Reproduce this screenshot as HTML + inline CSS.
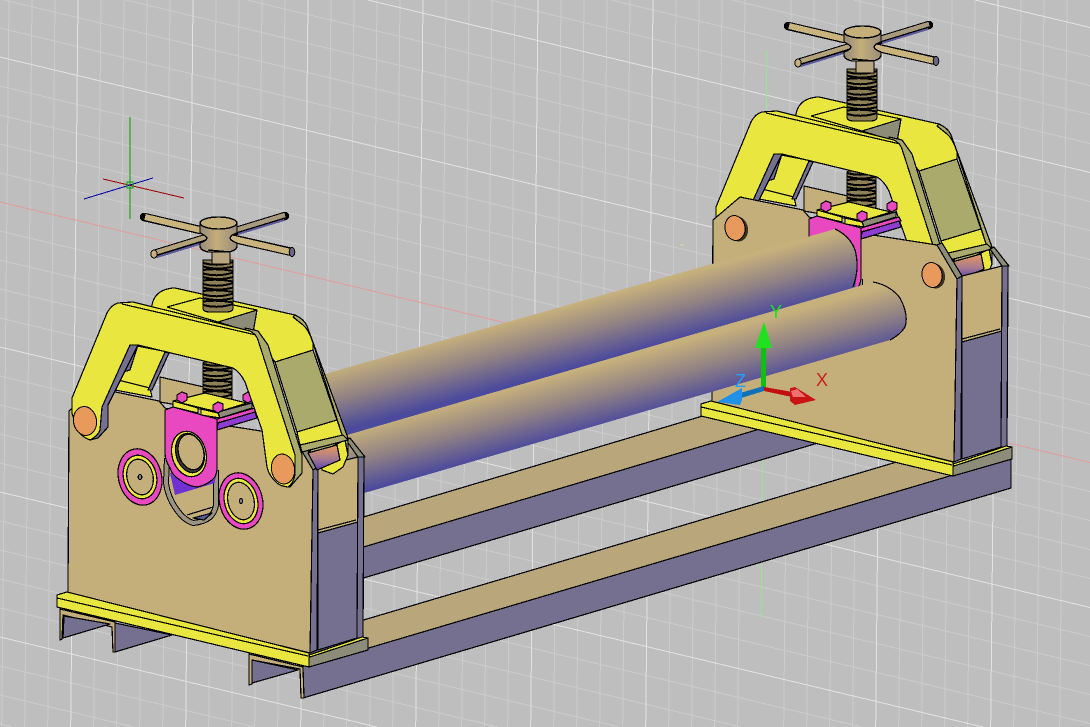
<!DOCTYPE html>
<html>
<head>
<meta charset="utf-8">
<title>CAD model</title>
<style>
html,body{margin:0;padding:0;background:#bebebe;width:1090px;height:727px;overflow:hidden}
svg{display:block}
.k{stroke:#000;stroke-width:1.2;stroke-linejoin:round}
.t{fill:#c4ae7a}.y{fill:#e9e640}.o{fill:#aaaa6c}.g{fill:#8c8c78}.s{fill:#75708f}.m{fill:#e848c0}.p{fill:#8f3cd0}
</style>
</head>
<body>
<svg width="1090" height="727" viewBox="0 0 1090 727" xmlns="http://www.w3.org/2000/svg" shape-rendering="crispEdges">
<defs>
<linearGradient id="r1" gradientUnits="userSpaceOnUse" x1="600" y1="297" x2="616" y2="356"><stop offset="0" stop-color="#c6b07c"/><stop offset=".5" stop-color="#8f8184"/><stop offset="1" stop-color="#4c4a9c"/></linearGradient>
<linearGradient id="r2" gradientUnits="userSpaceOnUse" x1="600" y1="364" x2="616" y2="423"><stop offset="0" stop-color="#c6b07c"/><stop offset=".5" stop-color="#8f8184"/><stop offset="1" stop-color="#4c4a9c"/></linearGradient>
<linearGradient id="cap" x1="0" x2="1" y1="0" y2="0"><stop offset="0" stop-color="#968a78"/><stop offset=".45" stop-color="#c4ae7a"/><stop offset="1" stop-color="#9a8c7c"/></linearGradient>
<linearGradient id="stub" x1="0" x2="0" y1="0" y2="1"><stop offset="0" stop-color="#e89a5c"/><stop offset=".55" stop-color="#a87a90"/><stop offset="1" stop-color="#5a40b0"/></linearGradient>

<g id="back">
  <polygon class="t k" points="160,377 217,390 217,412 160,402"/>
  <rect x="203" y="362" width="29" height="44" rx="2" fill="#8f7f56" stroke="#000" stroke-width="1.2"/>
  <path fill="none" stroke="#000" stroke-width="2" d="M203 364q15 4 29 -1m-29 4.5q15 4 29 0m-29 3.5q15 -2 29 1m-29 2.5q15 4 29 -1m-29 4.5q15 4 29 0m-29 3.5q15 -2 29 1m-29 2.5q15 4 29 -1m-29 4.5q15 4 29 0m-29 3.5q15 -2 29 1m-29 2.5q15 4 29 -1m-29 4.5q15 4 29 0m-29 3.5q15 -2 29 1"/>
</g>

<g id="yoke">
  <polygon class="o k" points="308,453 320,452 322,470 333,474 343,467 348,455 348,440 320,440"/>
  <polygon class="y k" points="321,452 345,440 348,455 343,467 333,474 322,470"/>
  <polygon fill="url(#stub)" class="k" points="308,453 337,445 340,460 317,470"/>
  <polygon class="y k" points="132,345 168,352 150,388 118,380"/>
  <polygon class="y k" points="118,380 150,388 152,397 115,390"/>
  <polygon class="s k" points="165,352 169,353 152,390 148,390"/>
  <polygon class="s k" points="130,347 138,345 130,370 123,372"/>
  <path class="y k" d="M150,311L152,305Q154,295 162,291Q168,288 175,288L295,315Q304,319 307,326L313,343V350L275,362L262,345L250,332Z"/>
  <polyline fill="none" class="k" points="167,307 200,298 257,310"/>
  <line class="k" x1="167" y1="307" x2="218" y2="322"/>
  <polygon class="g k" points="218,322 257,310 253,333 247,331"/>
  <path class="o k" d="M295,315Q304,319 307,326L348,438H343L313,343Q309,330 303,325L293,317Z"/>
  <polygon class="o k" points="275,362 313,350 337,420 297,432"/>
  <polygon class="y k" points="297,432 337,420 343,438 300,445"/>
  <polygon class="o k" points="300,445 343,435 348,440 302,452"/>
  <path d="M203,260H233V308Q233,312 226,312H210Q203,312 203,308Z" fill="#8f7f56" stroke="#000" stroke-width="1.2"/>
  <path fill="none" stroke="#000" stroke-width="2" d="M203 263q15 4 30 -1m-30 4.5q15 4 30 0m-30 3.5q15 -2 30 1m-30 2.5q15 4 30 -1m-30 4.5q15 4 30 0m-30 3.5q15 -2 30 1m-30 2.5q15 4 30 -1m-30 4.5q15 4 30 0m-30 3.5q15 -2 30 1m-30 2.5q15 4 30 -1m-30 4.5q15 4 30 0m-30 3.5q15 -2 30 1m-30 2.5q15 4 30 -1"/>
  <polygon class="o k" points="245,328 258,331 268,345 302,455 302,473 290,487 280,484"/>
  <polygon class="s k" points="130,345 138,345 108,405 108,427 98,438 90,440 100,430 102,407"/>
  <path class="y k" d="M72,398L107,313Q111,305 118,303L133,302L250,331Q256,334 258,340L295,455V475Q293,484 288,487Q280,486 277,483Q269,476 267,467L262,430L245,382Q240,372 233,368L138,345H130L102,407L100,430Q98,436 90,440Q82,437 77,430L72,413Z"/>
  <line class="k" x1="122" y1="304" x2="256" y2="335"/>
  <g>
    <line x1="144" y1="217" x2="200" y2="230" stroke="#000" stroke-width="8.5" stroke-linecap="round"/>
    <line x1="230" y1="238" x2="292" y2="252" stroke="#000" stroke-width="8.5"/>
    <line x1="154" y1="254" x2="206" y2="238" stroke="#000" stroke-width="8.5"/>
    <line x1="236" y1="231" x2="285" y2="216" stroke="#000" stroke-width="8.5" stroke-linecap="round"/>
    <line x1="145" y1="217" x2="200" y2="230" stroke="#c8b47c" stroke-width="6"/>
    <line x1="230" y1="238" x2="291" y2="252" stroke="#c8b47c" stroke-width="6"/>
    <line x1="154" y1="253" x2="206" y2="237" stroke="#b3a27a" stroke-width="4.5"/>
    <line x1="236" y1="230" x2="285" y2="215" stroke="#a89a7e" stroke-width="4.5"/>
    <line x1="157" y1="257" x2="206" y2="242" stroke="#5c5a9c" stroke-width="2"/>
    <line x1="238" y1="234" x2="284" y2="220" stroke="#5c5a9c" stroke-width="2"/>
    <ellipse cx="292" cy="252" rx="2.8" ry="4.5" fill="#6a6686" stroke="#000"/>
    <ellipse cx="154" cy="254" rx="3.2" ry="4" fill="#c8b47c" stroke="#000"/>
    <polygon points="212,249 230,250 230,264 212,264" fill="#b8a680" stroke="#000"/>
    <path d="M200,223V233Q206,236 207,238Q206,241 200,243V246Q200,250 208,252H229Q237,250 237,246V243Q231,241 230,238Q231,235 237,233V223Z" fill="url(#cap)" stroke="#000" stroke-width="1.4"/>
    <ellipse cx="218.500" cy="223" rx="18.500" ry="6" fill="#c4ae7a" stroke="#000" stroke-width="1.4"/>
    <line x1="208" y1="250" x2="230" y2="252" stroke="#000" stroke-width="1.4"/>
  </g>
</g>

<g id="frame">
  <polygon class="s k" points="312,470 318,467 317,650 310,653"/>
  <polygon class="t k" points="318,467 358,457 358,522 318,533"/>
  <line class="k" x1="318" y1="530" x2="356" y2="520"/>
  <polygon class="s k" points="318,533 358,522 357,638 318,650"/>
  <polygon class="s k" points="358,457 364,457 363,638 357,638"/>
  <polygon class="g k" points="346,440 350,438 365,457 358,457"/>
  <polygon class="g k" points="293,436 298,434 318,467 313,470"/>
  <polygon class="t k" points="69,411 96,388 159,401 165,408 216,424 293,436 313,470 310,653 68,593"/>
  <path d="M167,458L166,483Q168,498 177,510Q184,520 193,523Q204,522 210,517Q215,512 216,505L216,470" fill="none" stroke="#000" stroke-width="6"/>
  <path d="M167,458L166,483Q168,498 177,510Q184,520 193,523Q204,522 210,517Q215,512 216,505L216,470" fill="none" stroke="#9a9480" stroke-width="4"/>
  <line class="k" x1="187" y1="515" x2="213" y2="507"/>
  <polygon fill="#5c5a98" class="k" points="193,518 212,513 204,520"/>
  <polygon fill="#7030d4" points="170,473 216,470 215,483 175,495"/>
  <path class="m k" d="M165,410L173,407L217,419L217,470Q216,475 215,477Q208,485 197,487Q188,486 180,480Q172,475 170,468Q165,460 165,453Z"/>
  <polygon class="m k" points="217,419 255,408 257,412 217,423"/>
  <polygon class="p k" points="218,423 255,412 257,418 217,430"/>
  <ellipse cx="189" cy="454" rx="17" ry="23" transform="rotate(-15 189 454)" class="y k"/>
  <ellipse cx="190" cy="453" rx="14" ry="20" transform="rotate(-15 190 453)" fill="#3c3830" class="k"/>
  <ellipse cx="191" cy="452" rx="12.500" ry="18" transform="rotate(-15 191 452)" class="t k"/>
  <polygon class="y k" points="173,401 205,393 247,403 218,412"/>
  <polygon class="y k" points="173,401 198,408 198,413 173,407"/>
  <polygon class="y k" points="201,409 218,413 220,418 201,415"/>
  <polygon class="g k" points="218,412 252,403 252,408 220,418"/>
  <polygon class="m k" points="177,395 182,392 187,394 187,400 182,403 177,400"/>
  <polygon class="m k" points="213,405 218,402 223,404 223,410 218,413 213,410"/>
  <polygon class="m k" points="243,395 248,392 253,394 253,400 248,403 243,400"/>
  <polygon class="y k" points="57,595 67,592 309,653 309,667 57,607"/>
  <line class="k" x1="57" y1="598" x2="308" y2="656"/>
  <polygon class="g k" points="309,655 368,638 368,650 309,667"/>
  <polygon class="y k" points="309,655 362,637 368,638 310,657"/>
</g>
</defs>

<rect width="1090" height="727" fill="#bebebe"/>
<path stroke="#cccccc" stroke-width="1" fill="none" d="M9 0l-7.3 727M32 0l-7.3 727M55 0l-7.3 727M101 0l-7.3 727M124 0l-7.3 727M147 0l-7.3 727M170 0l-7.3 727M216 0l-7.3 727M239 0l-7.3 727M262 0l-7.3 727M285 0l-7.3 727M331 0l-7.3 727M354 0l-7.3 727M377 0l-7.3 727M400 0l-7.3 727M446 0l-7.3 727M469 0l-7.3 727M492 0l-7.3 727M515 0l-7.3 727M561 0l-7.3 727M584 0l-7.3 727M607 0l-7.3 727M630 0l-7.3 727M676 0l-7.3 727M699 0l-7.3 727M722 0l-7.3 727M745 0l-7.3 727M791 0l-7.3 727M814 0l-7.3 727M837 0l-7.3 727M860 0l-7.3 727M906 0l-7.3 727M929 0l-7.3 727M952 0l-7.3 727M975 0l-7.3 727M1021 0l-7.3 727M1044 0l-7.3 727M1067 0l-7.3 727
M854 0L1090 56.5M732 0L1090 85.5M611 0L1090 114.5M490 0L1090 143.5M247 0L1090 201.5M126 0L1090 230.5M4 0L1090 259.5M0 28L1090 288.5M0 86L1090 346.5M0 115L1090 375.5M0 144L1090 404.5M0 173L1090 433.5M0 231L1090 491.5M0 260L1090 520.5M0 289L1090 549.500M0 318L1090 578.5M0 376L1090 636.5M0 405L1090 665.5M0 434L1090 694.5M0 463L1090 723.5M862 727L0 521M741 727L0 550M619 727L0 579M498 727L0 608M255 727L0 666M134 727L0 695M13 727L0 724"/>
<path stroke="#e2e2e2" stroke-width="1" fill="none" d="M78 0l-7.3 727M193 0l-7.3 727M308 0l-7.3 727M423 0l-7.3 727M538 0l-7.3 727M653 0l-7.3 727M883 0l-7.3 727M998 0l-7.3 727M975 0L1090 27.5M368 0L1090 172.5M0 57L1090 317.5M0 347L1090 607.5M983 727L0 492M377 727L0 637"/>
<line x1="0" y1="202" x2="1090" y2="462.500" stroke="#e29a9a"/>
<line x1="767" y1="50" x2="761" y2="618" stroke="#96e696"/>
<line x1="680" y1="245" x2="684" y2="245" stroke="#d8e690"/>

<line x1="130" y1="117" x2="130" y2="219" stroke="#00a000"/>
<line x1="103" y1="179" x2="184" y2="198" stroke="#a00000"/>
<line x1="84" y1="199" x2="153" y2="178" stroke="#0000a8"/>
<rect x="127" y="182" width="6" height="6" fill="none" stroke="#00a000"/>

<!-- rails -->
<polygon class="s k" points="303,650 1011,450 1011,488 303,698"/>
<polygon fill="#b9a77b" class="k" points="340,627 900,461 953,475 345,655"/>
<polygon class="s k" points="340,554 800,417 818,443 340,585"/>
<polygon fill="#b9a77b" class="k" points="340,524 800,387 800,417 340,554"/>

<!-- right frame -->
<g transform="translate(644,-191)">
  <use href="#back"/>
  <use href="#yoke"/>
  <use href="#frame"/>
</g>
<ellipse cx="738" cy="229" rx="10" ry="12.500" fill="#3a3320" transform="rotate(-10 738 229)"/>
<ellipse cx="735" cy="228" rx="10" ry="12.500" fill="#e89a5c" stroke="#000" transform="rotate(-10 735 228)"/>
<ellipse cx="935" cy="276" rx="10" ry="12.500" fill="#3a3320" transform="rotate(-10 935 276)"/>
<ellipse cx="932" cy="275" rx="10" ry="12.500" fill="#e89a5c" stroke="#000" transform="rotate(-10 932 275)"/>

<!-- rollers -->
<path fill="url(#r1)" stroke="none" d="M300,381L835,229Q850,236 855,250Q860,268 853,300L300,460Z"/>
<path fill="none" stroke="#000" stroke-width="1.2" d="M835,229Q850,236 855,250Q860,268 853,287"/>
<path fill="url(#r2)" stroke="none" d="M330,440L873,282Q890,285 900,298Q909,315 905,327Q900,335 890,340L330,503Z"/>
<path fill="none" stroke="#000" stroke-width="1.2" d="M873,282Q890,285 900,298Q909,315 905,327Q900,335 890,340"/>

<!-- left frame -->
<use href="#back"/>
<use href="#frame"/>
<!-- face rings, left plate only -->
<ellipse cx="140" cy="477" rx="21.500" ry="28.500" transform="rotate(-14 140 477)" class="m k"/>
<ellipse cx="140" cy="477" rx="16.500" ry="22" transform="rotate(-14 140 477)" class="y k"/>
<ellipse cx="140" cy="477" rx="13" ry="18" transform="rotate(-14 140 477)" class="t k"/>
<ellipse cx="140" cy="477" rx="1.800" ry="2.500" class="g k"/>
<ellipse cx="241" cy="501" rx="21.500" ry="28.500" transform="rotate(-14 241 501)" class="m k"/>
<ellipse cx="241" cy="501" rx="16.500" ry="23" transform="rotate(-14 241 501)" class="y k"/>
<ellipse cx="241" cy="501" rx="13" ry="19" transform="rotate(-14 241 501)" class="t k"/>
<ellipse cx="241" cy="501" rx="1.500" ry="2.500" class="g k"/>
<!-- channels -->
<polygon class="t k" points="60,609 115,622 116,652 113,652 112,627 63,615 62,639 60,640"/>
<polygon class="s k" points="64,616 110,624 63,638"/>
<polygon class="s k" points="115,623 172,635 115,652"/>
<polygon class="t k" points="249,654 303,667 304,698 301,698 300,669 252,660 252,684 249,685"/>
<polygon class="s k" points="252,660 298,670 252,683"/>
<use href="#yoke"/>
<ellipse cx="85" cy="421" rx="11.500" ry="14.500" fill="#e89a5c" stroke="#000" transform="rotate(-10 85 421)"/>
<ellipse cx="283" cy="469" rx="11.500" ry="15" fill="#e89a5c" stroke="#000" transform="rotate(-10 283 469)"/>

<!-- UCS gizmo -->
<rect x="761" y="347" width="5" height="41" fill="#10c010"/>
<polygon points="764,322 772,348 755,348" fill="#20e020"/>
<polygon points="764,387 793,392 792,397 764,391" fill="#c01010"/>
<polygon points="790,388 795,387 816,400 795,405 790,401" fill="#c81414"/>
<polygon points="791,391 797,389 806,397 793,397" fill="#ee7070"/>
<polygon points="764,386 740,393 741,398 764,391" fill="#1070b8"/>
<polygon points="742,388 717,402 740,405 742,400" fill="#2090e8"/>
<text x="770" y="318" font-family="'Liberation Sans',sans-serif" font-size="18" fill="#20e020">Y</text>
<text x="735" y="387" font-family="'Liberation Sans',sans-serif" font-size="18" fill="#20a0ff">Z</text>
<text x="816" y="386" font-family="'Liberation Sans',sans-serif" font-size="18" fill="#c82020">X</text>
</svg>
</body>
</html>
